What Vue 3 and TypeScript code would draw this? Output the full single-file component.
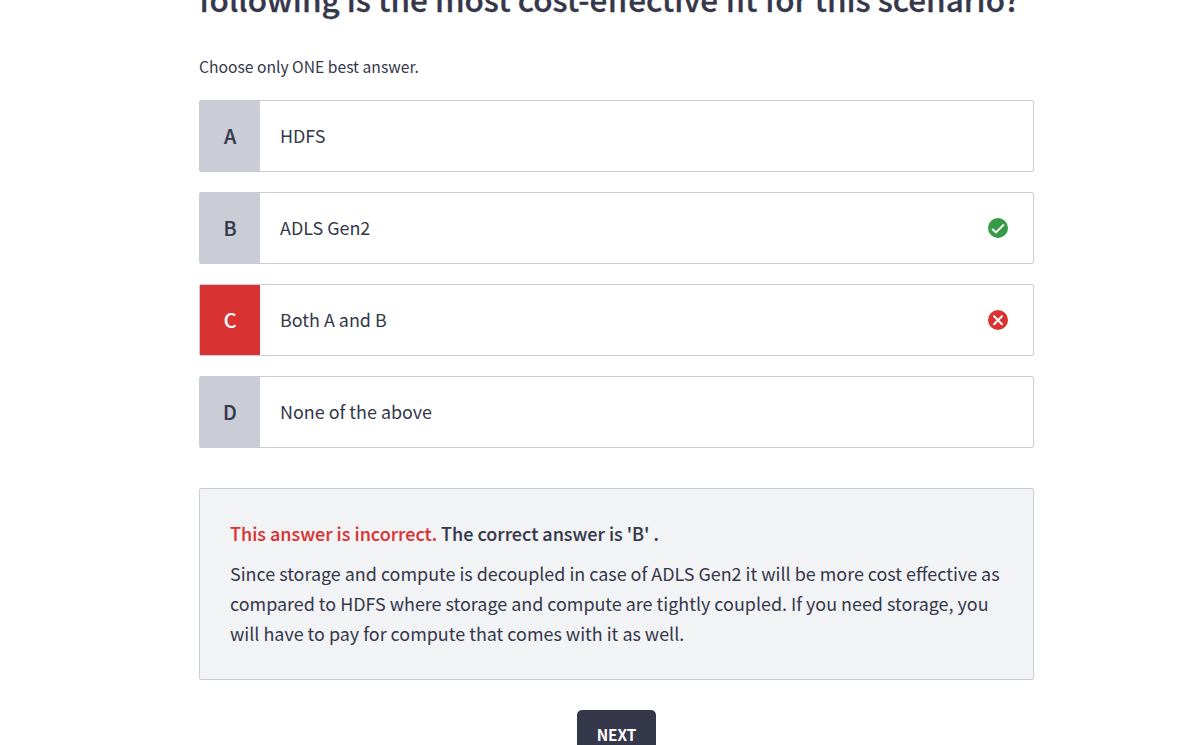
<script setup lang="ts">
type Status = 'correct' | 'incorrect'

interface Option {
  letter: string
  text: string
  status?: Status
}

const options: Option[] = [
  { letter: 'A', text: 'HDFS' },
  { letter: 'B', text: 'ADLS Gen2', status: 'correct' },
  { letter: 'C', text: 'Both A and B', status: 'incorrect' },
  { letter: 'D', text: 'None of the above' },
]
</script>

<template>
  <main class="quiz">
    <h1 class="question">following is the most cost-effective fit for this scenario?</h1>
    <p class="hint">Choose only ONE best answer.</p>

    <ul class="options">
      <li v-for="option in options" :key="option.letter" class="option">
        <span class="letter" :class="{ wrong: option.status === 'incorrect' }">{{ option.letter }}</span>
        <span class="text">{{ option.text }}</span>
        <svg v-if="option.status" class="icon" :class="option.status" viewBox="0 0 20 20" aria-hidden="true">
          <circle cx="10" cy="10" r="10" />
          <path v-if="option.status === 'correct'" d="M4.2 10.9 8 14.4 16 6.4" />
          <path v-else d="M6 6.3 14 14.3M14 6.3 6 14.3" />
        </svg>
      </li>
    </ul>

    <section class="explanation">
      <p class="verdict"><span class="verdict-status">This answer is incorrect.</span> The correct answer is 'B' .</p>
      <p class="reason">Since storage and compute is decoupled in case of ADLS Gen2 it will be more cost effective as compared to HDFS where storage and compute are tightly coupled. If you need storage, you will have to pay for compute that comes with it as well.</p>
    </section>

    <div class="actions"><button class="next" type="button">NEXT</button></div>
  </main>
</template>

<style>
html,
body {
  height: 100%;
  overflow: hidden;
  background: #fff;
}
</style>

<style scoped>
.quiz {
  width: 835px;
  height: 745px;
  margin-left: 199px;
  overflow: hidden;
  color: #35374b;
  font-family: "Noto Sans CJK SC", "Noto Sans", sans-serif;
}

.question {
  margin: -28px 0 0;
  font-size: 31.46px;
  font-weight: 500;
  line-height: 54px;
  -webkit-text-stroke: 0.3px #35374b;
  white-space: nowrap;
}

.hint {
  margin: 26px 0 18px;
  font-size: 15.67px;
  line-height: 30px;
}

.options {
  display: flex;
  flex-direction: column;
  gap: 20px;
  margin: 0;
  padding: 0;
  list-style: none;
}

.option {
  display: flex;
  align-items: center;
  box-sizing: border-box;
  height: 72px;
  border: 1px solid #c9ccd5;
  border-radius: 2px;
}

.letter {
  display: flex;
  align-items: center;
  justify-content: center;
  box-sizing: border-box;
  width: 60px;
  height: 70px;
  padding-bottom: 2px;
  background: #cacdd6;
  font-size: 19.7px;
  font-weight: 500;
  -webkit-text-stroke: 0.2px currentColor;
}

.letter.wrong {
  background: #d93232;
  color: #fff;
}

.text {
  flex: 1;
  padding: 0 0 2px 20px;
  font-size: 17.91px;
  line-height: 30px;
}

.icon {
  width: 20px;
  height: 20px;
  margin-right: 25px;
}

.icon path {
  fill: none;
  stroke: #fff;
  stroke-width: 2;
}

.icon.incorrect path {
  stroke-linecap: round;
}

.correct circle {
  fill: #369b47;
}

.incorrect circle {
  fill: #d93232;
}

.explanation {
  box-sizing: border-box;
  height: 192px;
  margin-top: 40px;
  padding: 29px 30px 31px;
  border: 1px solid #c9ccd5;
  border-radius: 2px;
  background: #f1f3f5;
  font-size: 17.91px;
  line-height: 30px;
}

.verdict {
  margin: 0 0 10px;
  font-size: 17.99px;
  font-weight: 500;
  -webkit-text-stroke: 0.1px currentColor;
}

.verdict-status {
  color: #d93232;
}

.reason {
  margin: 0;
}

.actions {
  display: flex;
  justify-content: center;
  margin-top: 30px;
}

.next {
  width: 79px;
  height: 50px;
  padding: 0 0 2px;
  border: 0;
  border-radius: 5px;
  background: #35374b;
  color: #fff;
  font: 700 15.3px/48px "Noto Sans CJK SC", "Noto Sans", sans-serif;
}
</style>
